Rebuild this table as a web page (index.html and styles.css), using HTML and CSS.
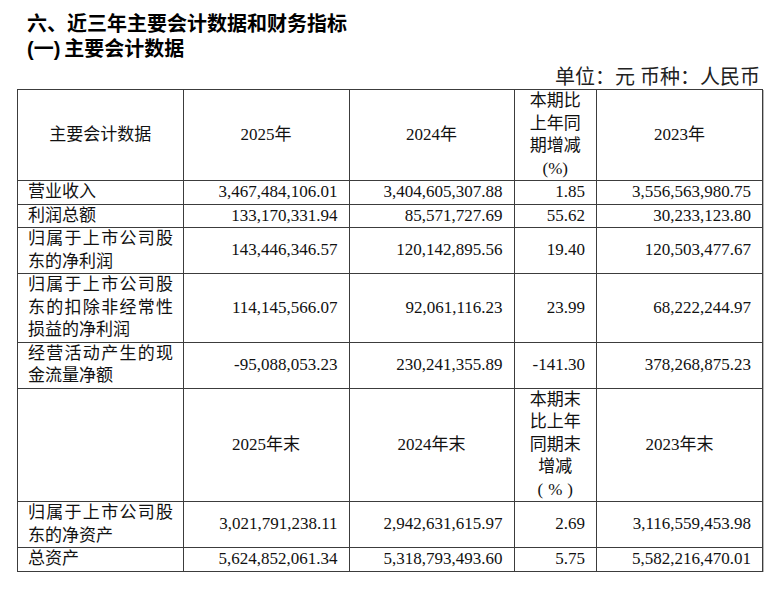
FILE: index.html
```html
<!DOCTYPE html>
<html lang="zh-CN">
<head>
<meta charset="utf-8">
<title>主要会计数据</title>
<link rel="stylesheet" href="styles.css">
</head>
<body>
<div class="page">
  <h1 class="title">六、近三年主要会计数据和财务指标</h1>
  <h2 class="subtitle">(一)&thinsp;主要会计数据</h2>
  <div class="unit">单位：元&nbsp;币种：人民币</div>
  <table class="data">
    <colgroup>
      <col class="c1"><col class="c2"><col class="c3"><col class="c4"><col class="c5">
    </colgroup>
    <tr class="head">
      <td class="hc">主要会计数据</td>
      <td class="hc">2025年</td>
      <td class="hc">2024年</td>
      <td class="hc">本期比<br>上年同<br>期增减<br>(%)</td>
      <td class="hc">2023年</td>
    </tr>
    <tr>
      <td class="lab">营业收入</td>
      <td class="num">3,467,484,106.01</td>
      <td class="num">3,404,605,307.88</td>
      <td class="num">1.85</td>
      <td class="num">3,556,563,980.75</td>
    </tr>
    <tr>
      <td class="lab">利润总额</td>
      <td class="num">133,170,331.94</td>
      <td class="num">85,571,727.69</td>
      <td class="num">55.62</td>
      <td class="num">30,233,123.80</td>
    </tr>
    <tr>
      <td class="lab">归属于上市公司股东的净利润</td>
      <td class="num">143,446,346.57</td>
      <td class="num">120,142,895.56</td>
      <td class="num">19.40</td>
      <td class="num">120,503,477.67</td>
    </tr>
    <tr>
      <td class="lab">归属于上市公司股东的扣除非经常性损益的净利润</td>
      <td class="num">114,145,566.07</td>
      <td class="num">92,061,116.23</td>
      <td class="num">23.99</td>
      <td class="num">68,222,244.97</td>
    </tr>
    <tr>
      <td class="lab">经营活动产生的现金流量净额</td>
      <td class="num">-95,088,053.23</td>
      <td class="num">230,241,355.89</td>
      <td class="num">-141.30</td>
      <td class="num">378,268,875.23</td>
    </tr>
    <tr class="head">
      <td class="hc"></td>
      <td class="hc">2025年末</td>
      <td class="hc">2024年末</td>
      <td class="hc">本期末<br>比上年<br>同期末<br>增减<br>(<span class="pct">%</span>)</td>
      <td class="hc">2023年末</td>
    </tr>
    <tr>
      <td class="lab">归属于上市公司股东的净资产</td>
      <td class="num">3,021,791,238.11</td>
      <td class="num">2,942,631,615.97</td>
      <td class="num">2.69</td>
      <td class="num">3,116,559,453.98</td>
    </tr>
    <tr>
      <td class="lab">总资产</td>
      <td class="num">5,624,852,061.34</td>
      <td class="num">5,318,793,493.60</td>
      <td class="num">5.75</td>
      <td class="num">5,582,216,470.01</td>
    </tr>
  </table>
</div>
</body>
</html>
```

FILE: styles.css
```css
html, body {
  margin: 0;
  padding: 0;
  background: #ffffff;
}

.page {
  padding: 12px 16px 0 17px;
  color: #111111;
  text-spacing-trim: space-all;
}

.title,
.subtitle {
  margin: 0 0 0 10px;
  font-family: "Liberation Sans", "Noto Sans CJK SC", sans-serif;
  font-size: 20px;
  font-weight: bold;
  line-height: 25px;
  color: #000000;
}

.unit {
  margin-top: 3px;
  padding-right: 2px;
  text-align: right;
  font-family: "Liberation Serif", "Noto Sans CJK SC", serif;
  font-size: 20px;
  line-height: 24px;
  color: #222222;
}

.data {
  border-collapse: collapse;
  table-layout: fixed;
  width: 745px;
  font-family: "Liberation Serif", "Noto Sans CJK SC", serif;
  font-size: 17px;
  line-height: 22.5px;
  color: #111111;
  box-shadow: 1px 1px 0 #b8b8b8;
}

.c1 { width: 165.5px; }
.c2 { width: 166px; }
.c3 { width: 165px; }
.c4 { width: 82.5px; }
.c5 { width: 166px; }

.data td {
  border: 1px solid #3c3c3c;
  padding: 0;
  vertical-align: middle;
}

.head .hc {
  text-align: center;
  padding: 0 4px;
}

.data tr.head:first-child .hc {
  height: 88px;
}

.pct {
  margin: 0 5px;
}

.lab {
  text-align: justify;
  padding: 0 9.5px 0 10px !important;
}

.num {
  text-align: right;
  padding: 0 11px 0 4px !important;
  white-space: nowrap;
}
```
